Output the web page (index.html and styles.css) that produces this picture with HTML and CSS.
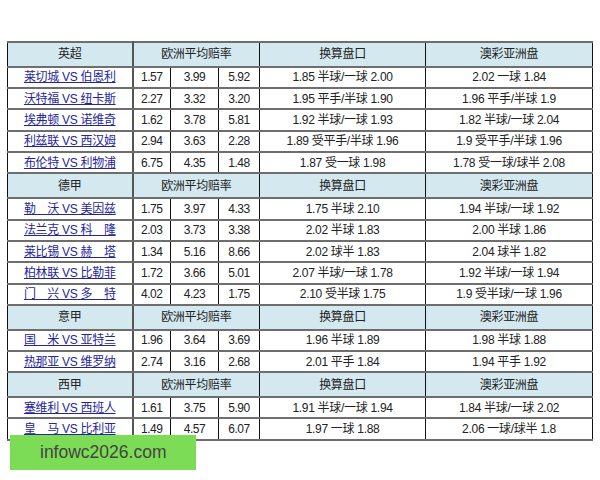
FILE: index.html
```html
<!DOCTYPE html>
<html lang="zh-CN">
<head>
<meta charset="utf-8">
<title>赔率</title>
<link rel="stylesheet" href="styles.css">
</head>
<body>
<div class="page">
<table class="odds">
<colgroup>
<col class="c-match"><col class="c-o1"><col class="c-o2"><col class="c-o3"><col class="c-hc"><col class="c-macau">
</colgroup>
<tbody>
<tr class="hd"><th class="first">英超</th><th colspan="3">欧洲平均赔率</th><th>换算盘口</th><th>澳彩亚洲盘</th></tr>
<tr class="row"><td class="first"><a href="#">莱切城 VS 伯恩利</a></td><td class="num">1.57</td><td class="num">3.99</td><td class="num">5.92</td><td>1.85 半球/一球 2.00</td><td>2.02 一球 1.84</td></tr>
<tr class="row"><td class="first"><a href="#">沃特福 VS 纽卡斯</a></td><td class="num">2.27</td><td class="num">3.32</td><td class="num">3.20</td><td>1.95 平手/半球 1.90</td><td>1.96 平手/半球 1.9</td></tr>
<tr class="row"><td class="first"><a href="#">埃弗顿 VS 诺维奇</a></td><td class="num">1.62</td><td class="num">3.78</td><td class="num">5.81</td><td>1.92 半球/一球 1.93</td><td>1.82 半球/一球 2.04</td></tr>
<tr class="row"><td class="first"><a href="#">利兹联 VS 西汉姆</a></td><td class="num">2.94</td><td class="num">3.63</td><td class="num">2.28</td><td>1.89 受平手/半球 1.96</td><td>1.9 受平手/半球 1.96</td></tr>
<tr class="row"><td class="first"><a href="#">布伦特 VS 利物浦</a></td><td class="num">6.75</td><td class="num">4.35</td><td class="num">1.48</td><td>1.87 受一球 1.98</td><td>1.78 受一球/球半 2.08</td></tr>
<tr class="hd"><th class="first">德甲</th><th colspan="3">欧洲平均赔率</th><th>换算盘口</th><th>澳彩亚洲盘</th></tr>
<tr class="row"><td class="first"><a href="#">勒　沃 VS 美因兹</a></td><td class="num">1.75</td><td class="num">3.97</td><td class="num">4.33</td><td>1.75 半球 2.10</td><td>1.94 半球/一球 1.92</td></tr>
<tr class="row"><td class="first"><a href="#">法兰克 VS 科　隆</a></td><td class="num">2.03</td><td class="num">3.73</td><td class="num">3.38</td><td>2.02 半球 1.83</td><td>2.00 半球 1.86</td></tr>
<tr class="row"><td class="first"><a href="#">莱比锡 VS 赫　塔</a></td><td class="num">1.34</td><td class="num">5.16</td><td class="num">8.66</td><td>2.02 球半 1.83</td><td>2.04 球半 1.82</td></tr>
<tr class="row"><td class="first"><a href="#">柏林联 VS 比勒菲</a></td><td class="num">1.72</td><td class="num">3.66</td><td class="num">5.01</td><td>2.07 半球/一球 1.78</td><td>1.92 半球/一球 1.94</td></tr>
<tr class="row"><td class="first"><a href="#">门　兴 VS 多　特</a></td><td class="num">4.02</td><td class="num">4.23</td><td class="num">1.75</td><td>2.10 受半球 1.75</td><td>1.9 受半球/一球 1.96</td></tr>
<tr class="hd"><th class="first">意甲</th><th colspan="3">欧洲平均赔率</th><th>换算盘口</th><th>澳彩亚洲盘</th></tr>
<tr class="row"><td class="first"><a href="#">国　米 VS 亚特兰</a></td><td class="num">1.96</td><td class="num">3.64</td><td class="num">3.69</td><td>1.96 半球 1.89</td><td>1.98 半球 1.88</td></tr>
<tr class="row"><td class="first"><a href="#">热那亚 VS 维罗纳</a></td><td class="num">2.74</td><td class="num">3.16</td><td class="num">2.68</td><td>2.01 平手 1.84</td><td>1.94 平手 1.92</td></tr>
<tr class="hd"><th class="first">西甲</th><th colspan="3">欧洲平均赔率</th><th>换算盘口</th><th>澳彩亚洲盘</th></tr>
<tr class="row"><td class="first"><a href="#">塞维利 VS 西班人</a></td><td class="num">1.61</td><td class="num">3.75</td><td class="num">5.90</td><td>1.91 半球/一球 1.94</td><td>1.84 半球/一球 2.02</td></tr>
<tr class="row"><td class="first"><a href="#">皇　马 VS 比利亚</a></td><td class="num">1.49</td><td class="num">4.57</td><td class="num">6.07</td><td>1.97 一球 1.88</td><td>2.06 一球/球半 1.8</td></tr>
</tbody>
</table>
<div class="watermark">infowc2026.com</div>
</div>
</body>
</html>
```

FILE: styles.css
```css
html, body {
  margin: 0;
  padding: 0;
  background: #ffffff;
}

.page {
  position: relative;
  width: 600px;
  height: 480px;
  padding-top: 41px;
  box-sizing: border-box;
}

.odds {
  margin-left: 7px;
  width: 585px;
  border-collapse: collapse;
  table-layout: fixed;
  border: 1px solid #000;
  font-family: "Liberation Sans", "Noto Sans CJK SC", sans-serif;
  font-size: 12px;
  letter-spacing: -0.3px;
  color: #222;
}

.c-match { width: 125px; }
.c-o1 { width: 38px; }
.c-o2 { width: 48px; }
.c-o3 { width: 41px; }
.c-hc { width: 166px; }
.c-macau { width: 167px; }

.odds th,
.odds td {
  padding: 0;
  text-align: center;
  white-space: nowrap;
  border-left: 1px solid #111;
  border-right: 1px solid #111;
  border-top: 2px solid #6e6e6e;
  border-bottom: 2px solid #6e6e6e;
  line-height: 14px;
}

.odds .first {
  border-right: 2px solid #555;
}

.odds .num {
  letter-spacing: -0.5px;
}

.odds th {
  font-weight: normal;
  background: #d3e8ef;
}

.hd { height: 24.75px; }
.row { height: 21.35px; }

.odds a {
  color: #26269c;
  text-decoration: underline;
}

.watermark {
  position: absolute;
  left: 10px;
  top: 435px;
  width: 186px;
  height: 35px;
  background: #7ddc55;
  color: #444;
  font-family: "Liberation Sans", Arial, sans-serif;
  font-size: 17.5px;
  line-height: 35px;
  padding-left: 30px;
  box-sizing: border-box;
}
```
